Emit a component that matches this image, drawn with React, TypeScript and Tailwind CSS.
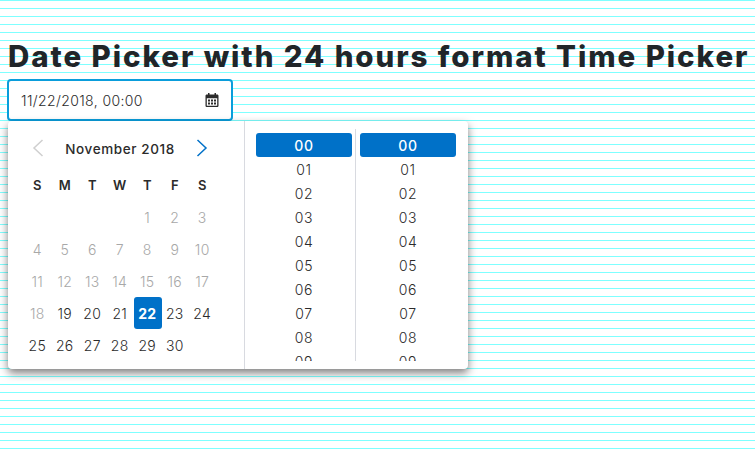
const rows: (number | null)[][] = [
  [null, null, null, null, 1, 2, 3],
  [4, 5, 6, 7, 8, 9, 10],
  [11, 12, 13, 14, 15, 16, 17],
  [18, 19, 20, 21, 22, 23, 24],
  [25, 26, 27, 28, 29, 30, null],
];
const heads = ["S", "M", "T", "W", "T", "F", "S"];
const hours = ["00", "01", "02", "03", "04", "05", "06", "07", "08", "09", "10"];

function Col() {
  return (
    <div className="h-[228px] w-[96px] overflow-hidden">
      {hours.map((h, i) => (
        <div
          key={h}
          className={
            "flex h-6 items-center justify-center rounded-[3px] text-[14px] tracking-[0.6px] " +
            (i === 0 ? "bg-[#0071c8] font-medium text-white" : "font-light text-[#2b2b2b]")
          }
        >
          {h}
        </div>
      ))}
    </div>
  );
}

export default function App() {
  return (
    <div
      className="h-[450px] w-[755px] overflow-hidden bg-white bg-[repeating-linear-gradient(to_bottom,#7fffff_0px,#7fffff_1px,#ffffff_1px,#ffffff_8px)] pt-[38px] pl-2 font-['Inter',sans-serif]"
    >
      <h1 className="h-[41px] whitespace-nowrap text-[29.5px] leading-[36px] font-extrabold tracking-[1.94px] text-[#212529]">
        Date Picker with 24 hours format Time Picker
      </h1>
      <div className="-ml-px flex h-[42px] w-[226px] items-center justify-between rounded-[4px] border-2 border-[#0a9ddb] bg-white pr-[11px] pl-3">
        <span className="text-[14px] font-light tracking-[0.38px] text-[#2b2b2b]">11/22/2018, 00:00</span>
        <svg width="16" height="16" viewBox="0 0 16 16" className="text-[#2b2b2b]">
          <path
            fill="currentColor"
            fillRule="evenodd"
            d="M4 1h1.5v1.5h5V1H12v1.5h1.2c.7 0 1.3.6 1.3 1.3v9.9c0 .7-.6 1.3-1.3 1.3H2.8c-.7 0-1.3-.6-1.3-1.3V3.8c0-.7.6-1.3 1.3-1.3H4V1ZM2.8 6.2v7.5h10.4V6.2H2.8Z"
          />
          <path
            fill="currentColor"
            d="M4 7.5h2v2H4zM7 7.5h2v2H7zM10 7.5h2v2h-2zM4 10.5h2v2H4zM7 10.5h2v2H7zM10 10.5h2v2h-2z"
          />
        </svg>
      </div>
      <div className="flex h-[248px] w-[460px] rounded-[4px] bg-white shadow-[0_4px_8px_rgba(0,0,0,0.5)]">
        <div className="w-[237px] shrink-0 border-r border-[#d8dae0] pl-4">
          <div className="flex h-[49px] w-[192px] items-center justify-between pr-[8px] pl-2 pt-[5px]">
            <svg width="12" height="18" viewBox="0 0 12 18" fill="none" stroke="#cfcfcf" strokeWidth="1.5">
              <path d="M10.5 1 2 9l8.5 8" />
            </svg>
            <span className="pt-[2px] text-[13.5px] font-medium tracking-[0.6px] text-[#2b2b2b]">November 2018</span>
            <svg width="12" height="18" viewBox="0 0 12 18" fill="none" stroke="#0071c8" strokeWidth="1.5">
              <path d="M1.5 1 10 9l-8.5 8" />
            </svg>
          </div>
          <div className="grid w-[192.5px] grid-cols-[repeat(7,27.5px)]">
            {heads.map((h, i) => (
              <div key={i} className="flex h-[31px] items-center justify-center pr-px text-[13px] font-semibold text-[#2b2b2b]">
                {h}
              </div>
            ))}
            {rows.flat().map((d, i) => (
              <div
                key={i}
                className={
                  "flex h-8 items-center justify-center rounded-[3px] pr-px text-[14px] tracking-[0.3px] " +
                  (d === 22
                    ? "bg-[#0071c8] font-bold text-white"
                    : d !== null && d <= 18
                      ? "font-light text-[#a8a8a8]"
                      : "font-light text-[#2b2b2b]")
                }
              >
                {d}
              </div>
            ))}
          </div>
        </div>
        <div className="flex pt-3 pl-[11px]">
          <Col />
          <div className="mx-[3px] -mt-1 h-[232px] w-px bg-[#d8dae0]" />
          <div className="w-px" />
          <Col />
        </div>
      </div>
    </div>
  );
}
